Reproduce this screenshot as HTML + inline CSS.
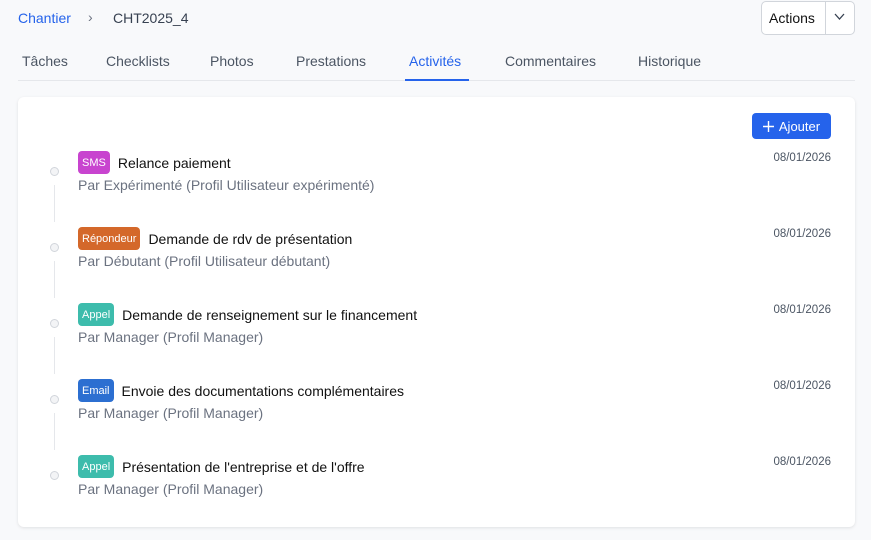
<!DOCTYPE html><html><head><style>
body{margin:0;width:871px;height:540px;background:#f8f9fb;font-family:"Liberation Sans",sans-serif;position:relative;overflow:hidden}
.a{position:absolute;white-space:nowrap}
.tab{position:absolute;top:53px;font-size:14px;color:#4b5563}
.card{position:absolute;left:18px;top:97px;width:837px;height:430px;background:#fff;border-radius:6px;box-shadow:0 1px 3px rgba(0,0,0,.1)}
.row{position:absolute;left:78px;display:flex;align-items:center;gap:8px;height:23px;white-space:nowrap}
.badge{display:flex;align-items:center;height:23px;padding:0 4px;border-radius:4px;color:#fff;font-size:11px}
.t{font-size:14px;color:#111}
.s{position:absolute;left:78px;font-size:14px;color:#6b7280;white-space:nowrap}
.d{position:absolute;right:40px;font-size:11.5px;color:#4b5563}
.dot{position:absolute;left:50px;width:7px;height:7px;border:1px solid #d1d5db;border-radius:50%;background:#f3f4f6}
.ln{position:absolute;left:54px;width:1px;height:37px;background:#e5e7eb}
</style></head><body>
<div class="a" style="left:18px;top:10px;font-size:14px;color:#2563eb">Chantier</div>
<div class="a" style="left:88px;top:9px;font-size:14px;color:#6b7280">›</div>
<div class="a" style="left:113px;top:10px;font-size:14px;color:#374151">CHT2025_4</div>
<div class="a" style="left:761px;top:1px;width:92px;height:32px;border:1px solid #d1d5db;border-radius:5px;background:#fff"></div>
<div class="a" style="left:825px;top:2px;width:1px;height:32px;background:#d1d5db"></div>
<div class="a" style="left:769px;top:10px;font-size:14px;color:#111">Actions</div>
<svg class="a" style="left:834px;top:13px" width="11" height="8"><path d="M1 1l4.5 5L10 1" fill="none" stroke="#374151" stroke-width="1.3"/></svg>
<div class="tab" style="left:22px">Tâches</div>
<div class="tab" style="left:106px">Checklists</div>
<div class="tab" style="left:210px">Photos</div>
<div class="tab" style="left:296px">Prestations</div>
<div class="tab" style="left:409px;color:#2563eb">Activités</div>
<div class="tab" style="left:505px">Commentaires</div>
<div class="tab" style="left:638px">Historique</div>
<div class="a" style="left:18px;top:80px;width:837px;height:1px;background:#e5e7eb"></div>
<div class="a" style="left:405px;top:79px;width:64px;height:2px;background:#2563eb"></div>
<div class="card"></div>
<div class="a" style="left:752px;top:113px;width:79px;height:26px;background:#2563eb;border-radius:4px;color:#fff;font-size:13px;display:flex;align-items:center;justify-content:center;gap:5px"><svg width="11" height="11"><path d="M5.5 0v11M0 5.5h11" stroke="#fff" stroke-width="1.4"/></svg>Ajouter</div>

<div class="dot" style="top:167px"></div><div class="ln" style="top:185px"></div>
<div class="row" style="top:151px"><span class="badge" style="background:#c844cf">SMS</span><span class="t">Relance paiement</span></div>
<div class="s" style="top:177px">Par Expérimenté (Profil Utilisateur expérimenté)</div>
<div class="d" style="top:152px">08/01/2026</div>

<div class="dot" style="top:243px"></div><div class="ln" style="top:261px"></div>
<div class="row" style="top:227px"><span class="badge" style="background:#d4682a">Répondeur</span><span class="t">Demande de rdv de présentation</span></div>
<div class="s" style="top:253px">Par Débutant (Profil Utilisateur débutant)</div>
<div class="d" style="top:228px">08/01/2026</div>

<div class="dot" style="top:319px"></div><div class="ln" style="top:337px"></div>
<div class="row" style="top:303px"><span class="badge" style="background:#3dbcac">Appel</span><span class="t">Demande de renseignement sur le financement</span></div>
<div class="s" style="top:329px">Par Manager (Profil Manager)</div>
<div class="d" style="top:304px">08/01/2026</div>

<div class="dot" style="top:395px"></div><div class="ln" style="top:413px"></div>
<div class="row" style="top:379px"><span class="badge" style="background:#2c6fd1">Email</span><span class="t">Envoie des documentations complémentaires</span></div>
<div class="s" style="top:405px">Par Manager (Profil Manager)</div>
<div class="d" style="top:380px">08/01/2026</div>

<div class="dot" style="top:471px"></div>
<div class="row" style="top:455px"><span class="badge" style="background:#3dbcac">Appel</span><span class="t">Présentation de l'entreprise et de l'offre</span></div>
<div class="s" style="top:481px">Par Manager (Profil Manager)</div>
<div class="d" style="top:456px">08/01/2026</div>
</body></html>
